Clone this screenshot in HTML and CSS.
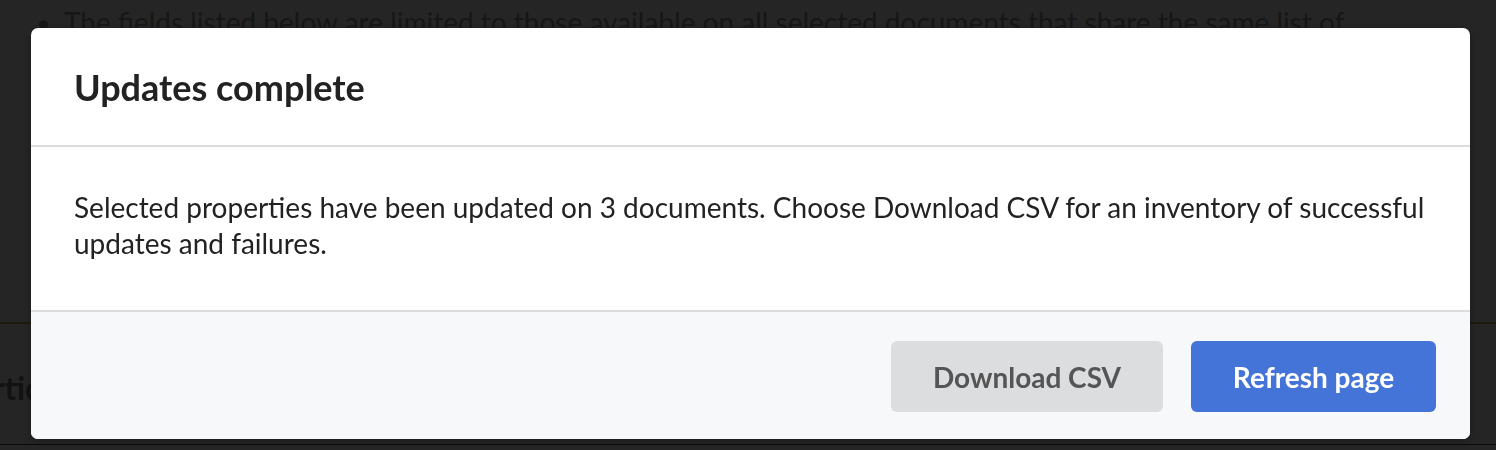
FILE: index.html
```html
<!DOCTYPE html>
<html lang="en">
<head>
<meta charset="utf-8">
<title>Updates complete</title>
<link rel="stylesheet" href="styles.css">
</head>
<body>
<div class="page">
  <ul class="notes">
    <li>The fields listed below are limited to those available on all selected documents that share the same list of properties.</li>
  </ul>
  <div class="spacer"></div>
  <div class="section">
    <h2 class="section-title">Particulars</h2>
  </div>
  <div class="bottom-strip"></div>
</div>
<div class="backdrop"></div>
<div class="modal" role="dialog" aria-labelledby="modal-title">
  <div class="modal-header">
    <h1 id="modal-title" class="modal-title">Updates complete</h1>
  </div>
  <div class="modal-body">
    <p>Selected properties have been updated on 3 documents. Choose Download CSV for an inventory of successful updates and failures.</p>
  </div>
  <div class="modal-footer">
    <button class="btn btn-secondary" type="button">Download CSV</button>
    <button class="btn btn-primary" type="button">Refresh page</button>
  </div>
</div>
</body>
</html>
```
FILE: styles.css
```css
* { box-sizing: border-box; }
html, body { margin: 0; padding: 0; }
body {
  width: 1496px;
  height: 450px;
  overflow: hidden;
  font-family: Lato, "Open Sans", "Liberation Sans", sans-serif;
  background: #ffffff;
  color: #222;
}
.page {
  height: 450px;
  display: flex;
  flex-direction: column;
}
.notes {
  margin: 0;
  padding: 0 0 0 64px;
  width: 1420px;
  font-size: 28px;
  line-height: 36px;
  color: #9a9a9a;
  height: 38px;
  overflow: hidden;
}
.notes li { padding-top: 4px; }
.spacer {
  flex: none;
  height: 286px;
  border-bottom: 2px solid #c9a24a;
}
.section {
  flex: 1;
  overflow: hidden;
}
.section-title {
  margin: 0 0 0 -43px;
  padding-top: 44px;
  font-size: 32px;
  font-weight: 700;
  line-height: 40px;
  color: #7a7a7a;
  white-space: nowrap;
}
.bottom-strip {
  flex: none;
  height: 6px;
  border-top: 1px solid #4a4a4a;
  background: #fbfbfb;
}
.backdrop {
  position: fixed;
  inset: 0;
  background: rgba(0, 0, 0, 0.855);
}
.modal {
  position: fixed;
  left: 31px;
  top: 28px;
  width: 1439px;
  height: 411px;
  background: #ffffff;
  border-radius: 7px;
  overflow: hidden;
  display: flex;
  flex-direction: column;
  box-shadow: 0 2px 10px rgba(0, 0, 0, 0.3);
}
.modal-header {
  flex: none;
  height: 119px;
  padding: 0 43px;
  display: flex;
  align-items: center;
  border-bottom: 2px solid #dcdcde;
}
.modal-title {
  margin: 0;
  font-size: 36px;
  line-height: 44px;
  font-weight: 700;
  color: #222222;
}
.modal-body {
  flex: none;
  height: 165px;
  padding: 42px 43px 0;
  border-bottom: 2px solid #dcdcde;
}
.modal-body p {
  margin: 0;
  font-size: 28px;
  line-height: 36px;
  color: #222222;
}
.modal-footer {
  flex: 1;
  background: #f7f8fa;
  display: flex;
  justify-content: flex-end;
  align-items: flex-start;
  gap: 28px;
  padding: 29px 34px 0;
}
.btn {
  height: 71px;
  border: 0;
  border-radius: 6px;
  font-family: Lato, "Open Sans", "Liberation Sans", sans-serif;
  font-size: 28px;
  font-weight: 700;
  cursor: pointer;
}
.btn-secondary {
  width: 272px;
  background: #dcdddf;
  color: #555555;
}
.btn-primary {
  width: 245px;
  background: #4574d9;
  color: #ffffff;
}
```
